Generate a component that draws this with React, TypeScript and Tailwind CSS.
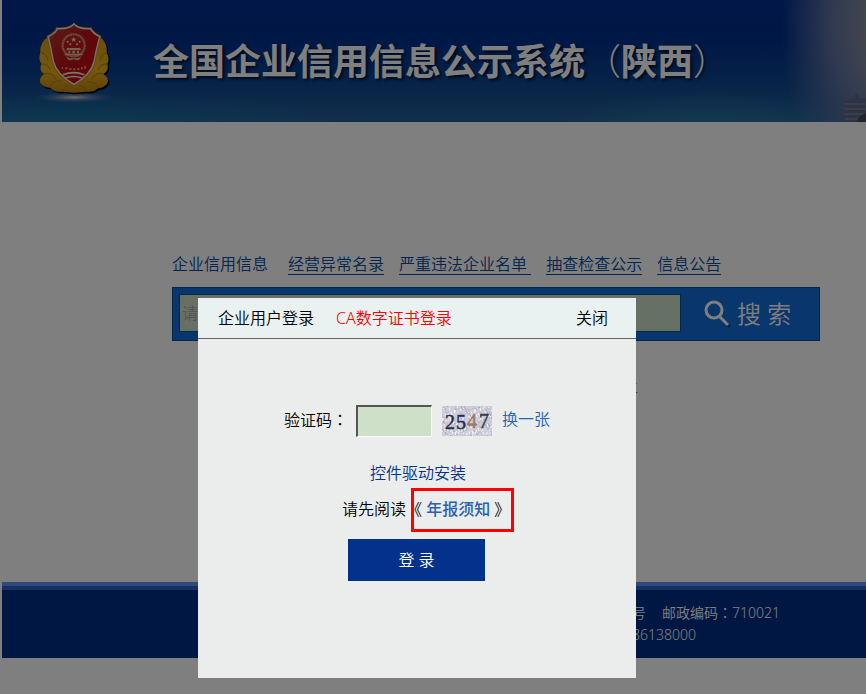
import React, { useState } from 'react';

const navLinks = ['经营异常名录', '严重违法企业名单 ', '抽查检查公示', '信息公告'];

// speckle pattern behind the captcha digits
const speckles = Array.from({ length: 230 }, (_, i) => ({
  x: (i * 37) % 51,
  y: (i * 23 + ((i * i) % 7)) % 31,
  dx: ((i * 7) % 5) - 2,
  dy: ((i * 3) % 4) + 1,
  color: ['#f4f4f8', '#a4a8bc', '#c4bccc', '#9aa6b0', '#e4e0ea'][(i * i + i) % 5],
}));

function Emblem() {
  return (
    <svg viewBox="0 0 270 270" className="h-[90px] w-[90px] shrink-0" aria-hidden="true">
      <defs>
        <linearGradient id="gold" x1="0" y1="0" x2="0" y2="1">
          <stop offset="0" stopColor="#d89814" />
          <stop offset="0.6" stopColor="#e8b01c" />
          <stop offset="1" stopColor="#c08410" />
        </linearGradient>
        <linearGradient id="red" x1="0" y1="0" x2="1" y2="1">
          <stop offset="0" stopColor="#b0402c" />
          <stop offset="0.45" stopColor="#bc1418" />
          <stop offset="1" stopColor="#d00410" />
        </linearGradient>
        <radialGradient id="halo">
          <stop offset="0" stopColor="#ffe9c8" stopOpacity="0.9" />
          <stop offset="0.5" stopColor="#b0b0c8" stopOpacity="0.4" />
          <stop offset="1" stopColor="#8090c0" stopOpacity="0" />
        </radialGradient>
      </defs>
      <ellipse cx="138" cy="250" rx="115" ry="16" fill="url(#halo)" />
      <path
        d="M62 66 Q34 86 37 116 Q30 134 40 150 Q32 170 48 180 Q30 196 38 208 Q48 222 66 221 Q82 236 104 233 L138 236 L174 233 Q196 236 210 223 Q230 222 238 208 Q246 196 226 180 Q244 170 238 150 Q246 134 236 116 Q240 88 214 66 Z"
        fill="#04081c"
        transform="translate(4 5)"
      />
      <path
        d="M62 66 Q34 86 37 116 Q30 134 40 150 Q32 170 48 180 Q30 196 38 208 Q48 222 66 221 Q82 236 104 233 L138 236 L174 233 Q196 236 210 223 Q230 222 238 208 Q246 196 226 180 Q244 170 238 150 Q246 134 236 116 Q240 88 214 66 Z"
        fill="url(#gold)"
      />
      <g stroke="#b07a10" strokeWidth="3" fill="none">
        <path d="M40 116q18 4 20 24M40 150q20-2 28 18M48 180q22-8 36 16M66 221q4-22 34-20M104 233q2-16 20-18" />
        <path d="M236 116q-18 4-20 24M238 150q-20-2-28 18M226 180q-22-8-36 16M210 223q-4-22-34-20M174 233q-2-16-20-18" />
      </g>
      <path
        d="M138 26 Q150 42 190 40 Q196 54 220 66 Q208 110 202 142 Q194 186 138 218 Q82 186 72 142 Q66 108 56 66 Q82 54 84 40 Q126 42 138 26Z"
        fill="#c8901c"
      />
      <path
        d="M138 30 Q152 46 187 44 Q194 58 215 68 Q204 110 198 142 Q190 180 138 211 Q86 180 76 142 Q70 108 61 68 Q84 58 88 44 Q124 46 138 30Z"
        fill="url(#red)"
        stroke="#f0e8e0"
        strokeWidth="4"
      />
      <circle cx="137" cy="94" r="33" fill="none" stroke="#d89878" strokeWidth="7" strokeDasharray="5 1" />
      <circle cx="137" cy="94" r="29" fill="#bc1c1c" />
      <path d="M137 68l2.500 6h6l-5 4 2 6-5.500-4-5.500 4 2-6-5-4h6z" fill="#ffd890" />
      <g fill="#ffd890">
        <circle cx="119" cy="83" r="3" />
        <circle cx="155" cy="83" r="3" />
        <circle cx="127" cy="91" r="3" />
        <circle cx="147" cy="91" r="3" />
      </g>
      <path d="M118 102h38l4 7h-46zM121 111h6v7h-6zM133 111h8v7h-8zM147 111h6v7h-6zM110 119h54v5h-54z" fill="#f0c098" />
      <path d="M113 127l12 5h24l12-5-8 12h-10l-6-4-6 4h-10z" fill="#d89878" />
      <g fill="#e0a858">
        <path d="M99 163l5-5 3 7zM112 160h6v6h-6zM124 162h6v6h-6zM136 163h6v6h-6zM148 162h6v6h-6zM159 160h5v6h-5zM169 157h5v7h-5z" />
      </g>
      <path d="M105 182q31-12 64 0M112 192q25-9 50 0" fill="none" stroke="#f4e8dc" strokeWidth="5" />
    </svg>
  );
}

function SearchIcon() {
  return (
    <svg viewBox="0 0 28 28" className="h-7 w-7" fill="none" aria-hidden="true">
      <path d="M17 18l9 9" stroke="#0a4488" strokeWidth="3" />
      <circle cx="10" cy="10" r="8" stroke="#fff" strokeWidth="3" />
      <path d="M15 16l9 9" stroke="#fff" strokeWidth="3" />
    </svg>
  );
}

function Captcha() {
  return (
    <svg viewBox="0 0 50 30" className="h-[30px] w-[50px]" role="img" aria-label="2547">
      <rect width="50" height="30" fill="#ccced8" />
      {speckles.map((s, i) => (
        <path key={i} d={`M${s.x} ${s.y}l${s.dx} ${s.dy}`} stroke={s.color} strokeWidth="1" />
      ))}
      <g fontFamily="Liberation Serif, serif" fontSize="20" fontWeight="400" strokeWidth="0.500">
        <text x="3" y="23" fill="#2c2c48" stroke="#2c2c48">2</text>
        <text x="14" y="23" fill="#2c2858" stroke="#2c2858">5</text>
        <text x="25" y="22" fill="#9c7868" stroke="#9c7868">4</text>
        <text x="37" y="22" fill="#38384c" stroke="#38384c">7</text>
      </g>
    </svg>
  );
}

function LoginDialog({ onClose }: { onClose: () => void }) {
  const [code, setCode] = useState('');

  return (
    <div
      role="dialog"
      aria-label="企业用户登录"
      className="absolute left-[198px] top-[298px] min-h-[380px] w-[438px] bg-[#eaedec] text-base leading-6 text-black"
    >
      <div className="flex h-[41px] items-center border-b border-[#666] bg-[#eaf1f1] pl-5 pr-7">
        <button type="button">企业用户登录</button>
        <button type="button" className="ml-[22px] text-[#ff0000]">CA数字证书登录</button>
        <button type="button" className="ml-auto" onClick={onClose}>关闭</button>
      </div>

      <form className="pt-[66px]" onSubmit={(e) => e.preventDefault()}>
        <div className="flex h-8 pl-[86px]">
          <label htmlFor="code" className="mt-[2px] w-[72px]">
            验证码<span className="font-['Noto_Sans_CJK_TC',sans-serif]">：</span>
          </label>
          <input
            id="code"
            value={code}
            onChange={(e) => setCode(e.target.value)}
            className="h-8 w-[76px] border-b border-l-2 border-r border-t-2 border-b-white border-l-[#555] border-r-white border-t-[#555] bg-[#cee0c8] px-1 outline-none"
          />
          <div className="mx-[10px] pt-px">
            <Captcha />
          </div>
          <a href="#" className="mt-[2px] text-[#2563b8]">换一张</a>
        </div>

        <div className="mt-6 pl-[172px]">
          <a href="#" className="text-[#03318c]">控件驱动安装</a>
        </div>

        <div className="relative mt-3 pl-36">
          请先阅读《 <a href="#" className="font-medium text-[#2a60b4]">年报须知</a> 》
          <span className="absolute -top-[9px] left-[213px] h-11 w-[103px] border-[3px] border-[#ff0000]" />
        </div>

        <button type="submit" className="ml-[150px] mt-[18px] block h-[42px] w-[137px] bg-[#03318c] text-white">
          登 录
        </button>
      </form>
    </div>
  );
}

export default function App() {
  const [open, setOpen] = useState(true);
  const [keyword, setKeyword] = useState('');

  return (
    <div className="relative flex min-h-screen flex-col bg-white pl-[2px] font-['Noto_Sans','Noto_Sans_CJK_SC',sans-serif] font-[350]">
      <header className="flex h-[122px] items-start bg-[radial-gradient(ellipse_120px_190px_at_104%_20%,#a4acb8,#848ca0_30%,#5c70a0_60%,transparent),radial-gradient(ellipse_160px_50px_at_82%_115%,#247ca8,transparent),radial-gradient(ellipse_300px_50px_at_8%_115%,#1478a8,transparent),linear-gradient(#002e90,#00308c_35%,#0c4490_65%,#246098)] pl-[26px] pt-[14px]">
        <Emblem />
        <h1 className="ml-[35px] mt-[22px] whitespace-nowrap text-4xl font-bold leading-[52px] text-white [text-shadow:2px_2px_3px_#001030]">
          全国企业信用信息公示系统<span className="font-light">（</span>陕西<span className="font-light">）</span>
        </h1>
        <svg viewBox="0 0 24 30" className="ml-auto mt-[78px] h-[30px] w-6" aria-hidden="true">
          <path d="M0 12L10 6h3V2h4v4h7v24H2z" fill="#5c6480" opacity="0.7" />
          <path d="M2 12h22M1 17h23M2 22h22M3 27h16" stroke="#8890a8" strokeWidth="1" />
          <path d="M14 30l4-6 6-3v9z" fill="#404c5c" />
        </svg>
      </header>

      <main className="pl-[170px] pt-[132px]">
        <nav className="flex text-base leading-5 text-[#084a9c]">
          <a href="#" className="mr-5">企业信用信息</a>
          <div className="flex gap-[15px]">
            {navLinks.map((link) => (
              <a key={link} href="#" className="whitespace-pre border-b border-[#084a9c]">{link}</a>
            ))}
          </div>
        </nav>

        <form
          className="mt-3 flex h-[54px] w-full max-w-[648px] border border-[#085098] bg-[#126cd8] p-[6px]"
          onSubmit={(e) => e.preventDefault()}
        >
          <input
            aria-label="搜索"
            placeholder="请"
            value={keyword}
            onChange={(e) => setKeyword(e.target.value)}
            className="h-[38px] min-w-0 max-w-[502px] flex-1 border border-[#085098] bg-[#cee0c8] px-[2px] text-base outline-none placeholder:text-[#a9a9a9]"
          />
          <button type="submit" className="ml-[23px] flex h-10 items-center gap-[5px] text-2xl text-white">
            <SearchIcon />
            搜 索
          </button>
        </form>

        <div className="mt-[38px] pl-[454px] text-xs leading-5 text-[#084a9c]">
          <a href="#">三</a>
        </div>
      </main>

      <footer className="mt-[183px] h-[76px] border-t-4 border-[#5e92f8] bg-[#002e88] text-sm leading-[22px] text-white">
        <div className="h-1 bg-[#2e60c8]" />
        <div className="pl-[630px] pt-[11px]">
          <p>
            号<span className="ml-4">邮政编码<span className="font-['Noto_Sans_CJK_TC',sans-serif]">：</span>710021</span>
          </p>
          <p>86138000</p>
        </div>
      </footer>

      {open && (
        <div className="absolute inset-0 bg-black/50" />
      )}
      {open && <LoginDialog onClose={() => setOpen(false)} />}
    </div>
  );
}
